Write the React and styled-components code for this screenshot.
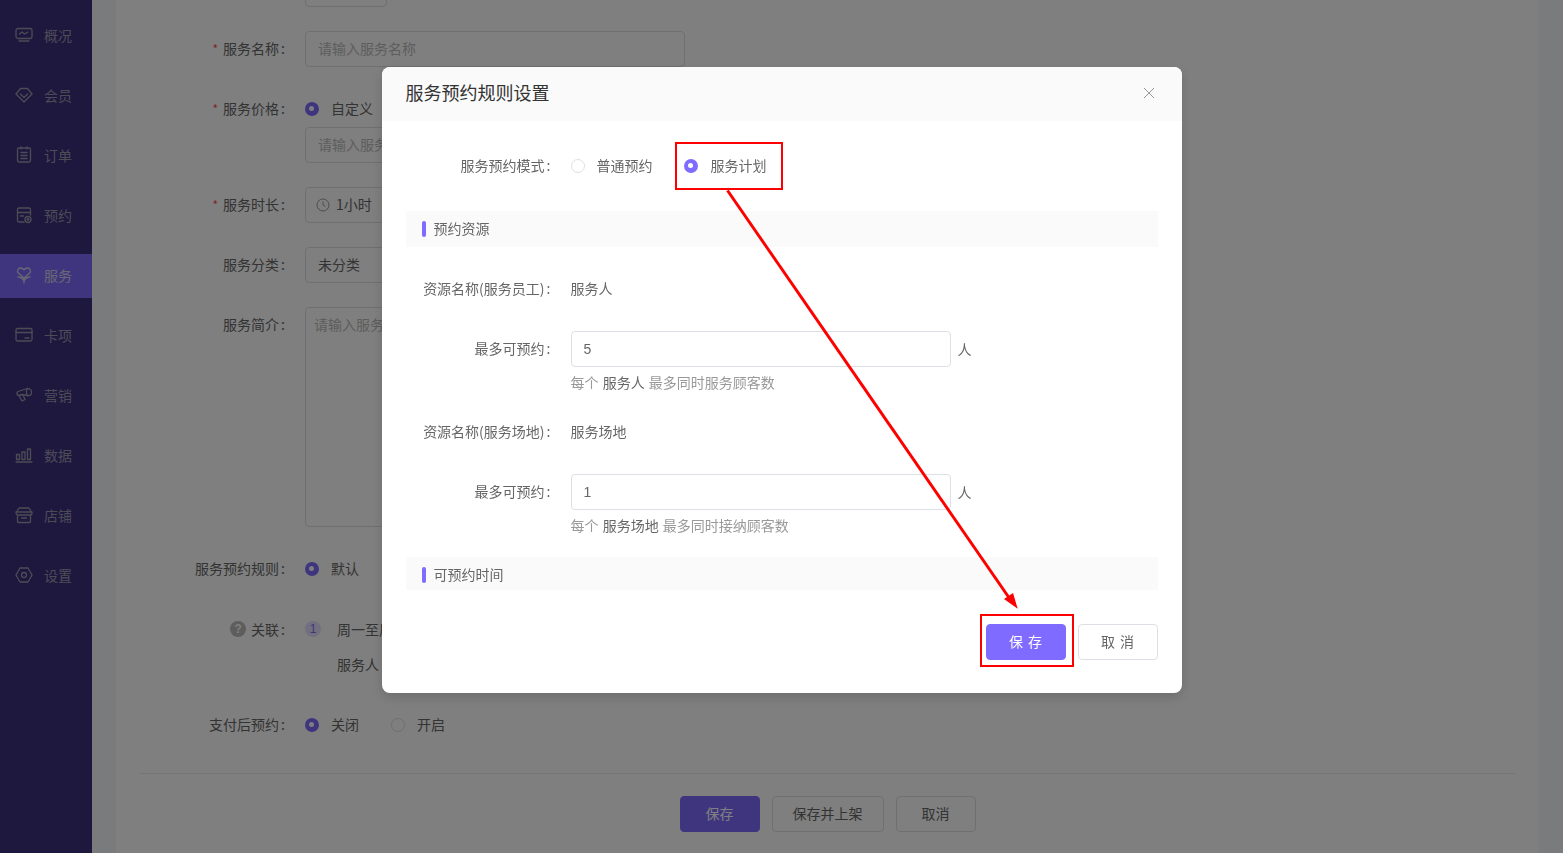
import React from "react";
import styled, { createGlobalStyle } from "styled-components";

const purple = "#7f6bff";

const GlobalStyle = createGlobalStyle`
  html, body {
    margin: 0;
    padding: 0;
    height: 100%;
    overflow: hidden;
  }
  body {
    font-family: "Noto Sans CJK SC", "Liberation Sans", sans-serif;
    font-size: 14px;
    color: #333;
  }
  * {
    box-sizing: border-box;
  }
`;

const Page = styled.div`
  display: flex;
  width: 1563px;
  height: 853px;
  overflow: hidden;
  background: #f5f6f8;
`;

const Sidebar = styled.nav`
  flex: 0 0 92px;
  display: flex;
  flex-direction: column;
  gap: 16px;
  padding-top: 14px;
  background: #3c307e;
`;

const NavItem = styled.div`
  display: flex;
  align-items: center;
  gap: 11px;
  height: 44px;
  padding: 0 0 2px 15px;
  color: ${(p) => (p.$active ? "#d4cfe8" : "#9b97ad")};
  background: ${(p) => (p.$active ? purple : "transparent")};

  svg {
    flex: 0 0 18px;
  }
`;

const Main = styled.main`
  flex: 1;
  padding: 0 24px;
  min-width: 0;
`;

const Panel = styled.div`
  display: flex;
  flex-direction: column;
  height: 100%;
  background: #fff;
`;

const Form = styled.div`
  display: flex;
  flex-direction: column;
  gap: 24px;
  margin-top: -29px;
`;

const Row = styled.div`
  display: grid;
  grid-template-columns: 169px 1fr;
  column-gap: 20px;
`;

const Label = styled.div`
  display: flex;
  align-items: center;
  justify-content: flex-end;
  height: 36px;
  padding-bottom: 2px;
  color: #666;

  &::after {
    content: ":";
    margin-left: 2px;
  }
`;

const LinkLabel = styled(Label)`
  padding-bottom: 0;
`;

const Star = styled.span`
  color: #ff4d4f;
  margin-right: 5px;
  font-size: 12px;
`;

const Help = styled.span`
  display: flex;
  align-items: center;
  justify-content: center;
  width: 16px;
  height: 16px;
  margin-right: 5px;
  border-radius: 50%;
  background: #bbb;
  color: #fff;
  font-family: "Liberation Sans", sans-serif;
  font-size: 12px;
  font-weight: 700;
`;

const Control = styled.div`
  display: flex;
  flex-direction: column;
  align-items: flex-start;
`;

const Box = styled.div`
  display: flex;
  align-items: ${(p) => (p.$tall ? "flex-start" : "center")};
  gap: 6px;
  width: ${(p) => p.$width || 380}px;
  height: ${(p) => p.$height || 36}px;
  padding: ${(p) => (p.$tall ? "5px 8px" : `0 ${p.$inset || 12}px 2px`)};
  border: 1px solid #dcdfe6;
  border-radius: 4px;
  background: #fff;
  color: ${(p) => (p.$muted ? "#bbb" : "#666")};
  line-height: 22px;

  svg {
    margin-bottom: -2px;
  }
`;

const NumberBox = styled(Box)`
  padding-bottom: 0;
  font-family: "Liberation Sans", "Noto Sans CJK SC", sans-serif;
`;

const RadioGroup = styled.div`
  display: flex;
  align-items: center;
  height: 36px;
`;

const RadioItem = styled.label`
  display: flex;
  align-items: center;
  gap: ${(p) => p.$space || 12}px;
  margin-right: ${(p) => (p.$gap === undefined ? 32 : p.$gap)}px;
  padding-bottom: 2px;
  color: #666;
`;

const RadioDot = styled.span`
  flex: 0 0 14px;
  width: 14px;
  height: 14px;
  margin-top: 2px;
  border-radius: 50%;
  background: ${(p) => (p.$checked ? purple : "#fff")};
  border: ${(p) => (p.$checked ? `4.5px solid ${purple}` : "1px solid #dcdfe6")};

  &::after {
    content: "";
    display: ${(p) => (p.$checked ? "block" : "none")};
    width: 5px;
    height: 5px;
    border-radius: 50%;
    background: #fff;
  }
`;

const LinkLine = styled.div`
  display: flex;
  align-items: center;
  height: 36px;
  color: #666;
`;

const StepBadge = styled.span`
  display: flex;
  align-items: center;
  justify-content: center;
  width: 16px;
  height: 16px;
  margin-right: 16px;
  border-radius: 50%;
  background: #e5e1ff;
  color: ${purple};
  font-family: "Liberation Sans", sans-serif;
  font-size: 12px;
`;

const LinkIndent = styled(LinkLine)`
  padding: 0 0 2px 32px;
`;

const Divider = styled.div`
  height: 1px;
  margin: 6px 0 22px 24px;
  width: 1375px;
  background: #e8e8e8;
`;

const Footer = styled.div`
  display: flex;
  justify-content: center;
  gap: 12px;
`;

const Button = styled.button`
  width: ${(p) => p.$width || 80}px;
  height: 36px;
  border-radius: 4px;
  border: 1px solid ${(p) => (p.$primary ? purple : "#dcdfe6")};
  background: ${(p) => (p.$primary ? purple : "#fff")};
  color: ${(p) => (p.$primary ? "#fff" : "#666")};
  font: inherit;
  word-spacing: 2px;
  padding: 0 0 2px;
`;

const Overlay = styled.div`
  position: fixed;
  inset: 0;
  display: flex;
  justify-content: center;
  align-items: flex-start;
  padding-top: 67px;
  background: rgba(0, 0, 0, 0.5);
`;

const Modal = styled.div`
  width: 800px;
  height: 626px;
  border-radius: 8px;
  background: #fff;
  overflow: hidden;
  box-shadow: 0 4px 12px rgba(0, 0, 0, 0.15);
`;

const ModalHeader = styled.div`
  display: flex;
  align-items: center;
  justify-content: space-between;
  height: 54px;
  padding: 0 27px 2px 24px;
  background: #fafafa;
`;

const ModalTitle = styled.div`
  padding-bottom: 2px;
  font-size: 18px;
  color: #333;
`;

const ModalBody = styled.div`
  padding: 27px 24px 0;
`;

const ModalRow = styled.div`
  display: grid;
  grid-template-columns: 145px 1fr;
  column-gap: 20px;
  margin-top: ${(p) => p.$top || 0}px;
`;

const ModalValue = styled.div`
  display: flex;
  align-items: center;
  height: 36px;
  padding-bottom: 2px;
  color: #666;
`;

const InputLine = styled.div`
  display: flex;
  align-items: center;
  height: 36px;
`;

const Unit = styled.span`
  margin-left: 7px;
  padding-bottom: 1px;
  color: #666;
`;

const Hint = styled.div`
  margin: 4px 0 0 165px;
  line-height: 22px;
  word-spacing: 1px;
  color: #999;

  b {
    font-weight: 400;
    color: #666;
  }
`;

const Section = styled.div`
  display: flex;
  align-items: center;
  gap: 8px;
  height: ${(p) => p.$height || 36}px;
  margin-top: ${(p) => p.$top}px;
  padding: 0 0 ${(p) => (p.$height ? 0 : 2)}px 16px;
  background: #fafafa;
  color: #666;

  &::before {
    content: "";
    width: 4px;
    height: 16px;
    margin-top: 2px;
    border-radius: 2px;
    background: ${purple};
  }
`;

const ModalFooter = styled.div`
  display: flex;
  justify-content: flex-end;
  gap: 12px;
  margin-top: 34px;
`;

const Annotation = styled.div`
  position: fixed;
  left: ${(p) => p.$x}px;
  top: ${(p) => p.$y}px;
  width: ${(p) => p.$w}px;
  height: ${(p) => p.$h}px;
  border: 2px solid #f00;
`;

const ArrowLayer = styled.svg`
  position: fixed;
  left: 0;
  top: 0;
  width: 1563px;
  height: 853px;
  pointer-events: none;
`;

const iconProps = {
  width: 18,
  height: 18,
  viewBox: "0 0 18 18",
  fill: "none",
  stroke: "currentColor",
  strokeWidth: 1.3,
  strokeLinecap: "round",
  strokeLinejoin: "round",
};

const navItems = [
  {
    name: "概况",
    icon: (
      <>
        <rect x="1" y="2.500" width="16" height="10" rx="2" />
        <path d="M4.500 8 7 6l2.500 2L13 6M4 15h10" />
      </>
    ),
  },
  {
    name: "会员",
    icon: (
      <>
        <path d="M5.500 2.500h7L17 8l-8 8-8-8z" />
        <path d="M5.500 8 9 11.500 12.500 8" />
      </>
    ),
  },
  {
    name: "订单",
    icon: (
      <>
        <rect x="2.500" y="2" width="13" height="14" rx="1.500" />
        <path d="M6 1v2M12 1v2M6 6.500h6M6 9.500h6M6 12.500h6" />
      </>
    ),
  },
  {
    name: "预约",
    icon: (
      <>
        <path d="M9 16H4a1.500 1.500 0 0 1-1.500-1.500v-11A1.500 1.500 0 0 1 4 2h10a1.500 1.500 0 0 1 1.500 1.500V9" />
        <path d="M2.500 6.500h13M5.500 10h3" />
        <circle cx="13" cy="13.500" r="3" />
        <circle cx="13" cy="13.500" r="0.800" />
      </>
    ),
  },
  {
    name: "服务",
    icon: (
      <>
        <path d="M9 12 3.500 7.200C1.500 5 3 2 5.600 2 7 2 8.300 2.800 9 4c.7-1.200 2-2 3.400-2C15 2 16.500 5 14.500 7.200z" />
        <path d="M9 12v5M3 11c2.500 0 5 1.500 6 4 1-2.500 3.500-4 6-4" />
      </>
    ),
  },
  {
    name: "卡项",
    icon: (
      <>
        <rect x="1" y="2.500" width="16" height="12.500" rx="1.500" />
        <path d="M1 6.500h16M10 12h4" />
      </>
    ),
  },
  {
    name: "营销",
    icon: (
      <>
        <path d="M3 5.500 12.500 2.500c3 0 4.500 2 4 4.500-.5 2-2 3-4 2.500L7 8.500 3 9.500c-1.500-1-1.500-3 0-4z" />
        <path d="M4 9.500 7 15l3-1.500L8 9M12.500 2.500c-1.500 1.500-1.500 5 0 7" />
      </>
    ),
  },
  {
    name: "数据",
    icon: (
      <>
        <path d="M1 16h16" />
        <rect x="1.500" y="8.500" width="3" height="5" />
        <rect x="7" y="6" width="3" height="7.500" />
        <rect x="12.500" y="3" width="3" height="10.500" />
      </>
    ),
  },
  {
    name: "店铺",
    icon: (
      <>
        <path d="M4 2h10l3 5c0 1-1 2-2 2H3C2 9 1 8 1 7z" />
        <path d="M2.500 9v6.500a1 1 0 0 0 1 1h11a1 1 0 0 0 1-1V9M1 6h16M6.500 12h5" />
      </>
    ),
  },
  {
    name: "设置",
    icon: (
      <>
        <path d="M5 2h8l4 7-4 7H5L1 9z" />
        <circle cx="9" cy="9" r="2.500" />
      </>
    ),
  },
];

const ClockIcon = () => (
  <svg width="14" height="14" viewBox="0 0 14 14" fill="none" stroke="#999" strokeWidth="1">
    <circle cx="7" cy="7" r="6" />
    <path d="M7 3.500V7l2.500 1.500" />
  </svg>
);

const CloseIcon = () => (
  <svg width="12" height="12" viewBox="0 0 12 12" fill="none" stroke="#999" strokeWidth="1">
    <path d="M1 1l10 10M11 1 1 11" />
  </svg>
);

const App = () => (
  <Page>
    <GlobalStyle />
    <Sidebar>
      {navItems.map((item) => (
        <NavItem key={item.name} $active={item.name === "服务"}>
          <svg {...iconProps}>{item.icon}</svg>
          {item.name}
        </NavItem>
      ))}
    </Sidebar>

    <Main>
      <Panel>
        <Form>
          <Row>
            <span />
            <Box $width={82} />
          </Row>
          <Row>
            <Label>
              <Star>*</Star>服务名称
            </Label>
            <Box $muted>请输入服务名称</Box>
          </Row>
          <Row>
            <Label>
              <Star>*</Star>服务价格
            </Label>
            <Control>
              <RadioGroup>
                <RadioItem>
                  <RadioDot $checked />
                  自定义
                </RadioItem>
              </RadioGroup>
              <Box $muted>请输入服务价格</Box>
            </Control>
          </Row>
          <Row>
            <Label>
              <Star>*</Star>服务时长
            </Label>
            <Box $inset={10}>
              <ClockIcon />
              1小时
            </Box>
          </Row>
          <Row>
            <Label>服务分类</Label>
            <Box>未分类</Box>
          </Row>
          <Row>
            <Label>服务简介</Label>
            <Box $tall $muted $height={220}>
              请输入服务简介
            </Box>
          </Row>
          <Row>
            <Label>服务预约规则</Label>
            <RadioGroup>
              <RadioItem>
                <RadioDot $checked />
                默认
              </RadioItem>
            </RadioGroup>
          </Row>
          <Row>
            <LinkLabel>
              <Help>?</Help>关联
            </LinkLabel>
            <Control>
              <LinkLine>
                <StepBadge>1</StepBadge>
                周一至周日
              </LinkLine>
              <LinkIndent>服务人</LinkIndent>
            </Control>
          </Row>
          <Row>
            <Label>支付后预约</Label>
            <RadioGroup>
              <RadioItem>
                <RadioDot $checked />
                关闭
              </RadioItem>
              <RadioItem>
                <RadioDot />
                开启
              </RadioItem>
            </RadioGroup>
          </Row>
          <Divider />
        </Form>
        <Footer>
          <Button $primary>保存</Button>
          <Button $width={112}>保存并上架</Button>
          <Button>取消</Button>
        </Footer>
      </Panel>
    </Main>

    <Overlay>
      <Modal>
        <ModalHeader>
          <ModalTitle>服务预约规则设置</ModalTitle>
          <CloseIcon />
        </ModalHeader>
        <ModalBody>
          <ModalRow>
            <Label>服务预约模式</Label>
            <RadioGroup>
              <RadioItem $gap={31}>
                <RadioDot />
                普通预约
              </RadioItem>
              <RadioItem $gap={0} $space={13}>
                <RadioDot $checked />
                服务计划
              </RadioItem>
            </RadioGroup>
          </ModalRow>

          <Section $top={27}>预约资源</Section>

          <ModalRow $top={24}>
            <Label>资源名称(服务员工)</Label>
            <ModalValue>服务人</ModalValue>
          </ModalRow>
          <ModalRow $top={24}>
            <Label>最多可预约</Label>
            <InputLine>
              <NumberBox>5</NumberBox>
              <Unit>人</Unit>
            </InputLine>
          </ModalRow>
          <Hint>
            每个 <b>服务人</b> 最多同时服务顾客数
          </Hint>

          <ModalRow $top={21}>
            <Label>资源名称(服务场地)</Label>
            <ModalValue>服务场地</ModalValue>
          </ModalRow>
          <ModalRow $top={24}>
            <Label>最多可预约</Label>
            <InputLine>
              <NumberBox>1</NumberBox>
              <Unit>人</Unit>
            </InputLine>
          </ModalRow>
          <Hint>
            每个 <b>服务场地</b> 最多同时接纳顾客数
          </Hint>

          <Section $top={21} $height={33}>
            可预约时间
          </Section>

          <ModalFooter>
            <Button $primary>保 存</Button>
            <Button>取 消</Button>
          </ModalFooter>
        </ModalBody>
      </Modal>
    </Overlay>

    <Annotation $x={675} $y={142} $w={108} $h={48} />
    <Annotation $x={980} $y={614} $w={94} $h={53} />
    <ArrowLayer viewBox="0 0 1563 853">
      <path d="M727.500 190.500 1012 602" stroke="#f00" strokeWidth="3" fill="none" />
      <path d="M1017.700 608.700 1004 599l9-6z" fill="#f00" />
    </ArrowLayer>
  </Page>
);

export default App;
